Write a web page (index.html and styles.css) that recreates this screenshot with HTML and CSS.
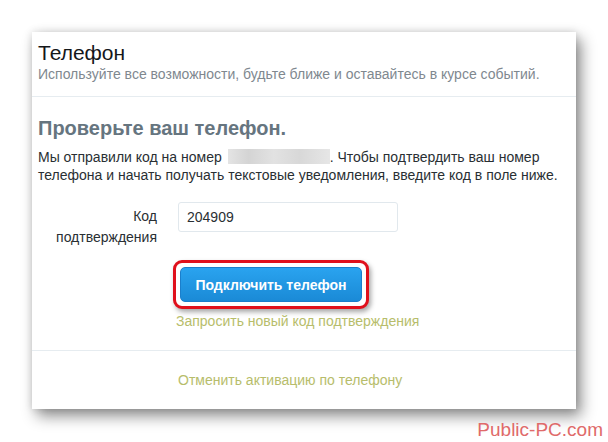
FILE: index.html
```html
<!DOCTYPE html>
<html lang="ru">
<head>
    <meta charset="UTF-8">
    <title>Телефон</title>
    <link rel="stylesheet" href="styles.css">
</head>
<body>
    <div class="card">
        <!-- Header -->
        <div class="card-head">
            <h1>Телефон</h1>
            <p class="subtitle">Используйте все возможности, будьте ближе и оставайтесь в курсе событий.</p>
        </div>
        <div class="card-body">
            <h2>Проверьте ваш телефон.</h2>
            <p class="info">
                Мы отправили код на номер <span class="blur"></span>. Чтобы подтвердить ваш номер
                телефона и начать получать текстовые уведомления, введите код в поле ниже.
            </p>
            <div class="form-row">
                <label class="code-label" for="code">Код подтверждения</label>
                <input class="code-input" id="code" type="text" value="204909">
            </div>
            <div class="actions">
                <div class="highlight">
                    <button class="btn">Подключить телефон</button>
                </div>
                <a class="link" href="#">Запросить новый код подтверждения</a>
            </div>
        </div>
        <div class="card-foot">
            <a class="link" href="#">Отменить активацию по телефону</a>
        </div>
    </div>
    <div class="watermark">Public-PC.com</div>
</body>
</html>
```

FILE: styles.css
```css
body {
    margin: 0;
    padding: 32px 0 0 32px;
    font-family: "Liberation Sans", Arial, sans-serif;
    background-color: #fff;
    width: 608px;
    height: 442px;
    box-sizing: border-box;
    position: relative;
    overflow: hidden;
}
.card {
    width: 544px;
    height: 377px;
    background-color: #fff;
    box-shadow: 5px 7px 14px rgba(0, 0, 0, 0.45), 0 0 8px rgba(0, 0, 0, 0.12);
    display: flex;
    flex-direction: column;
}
.card-head {
    padding: 9px 6px 0 6px;
    height: 55px;
    border-bottom: 1px solid #e6ecf0;
}
h1 {
    margin: 0;
    font-size: 21px;
    font-weight: normal;
    color: #14171a;
    line-height: 24px;
}
.subtitle {
    margin: 0;
    font-size: 14px;
    line-height: 18px;
    color: #80888f;
}
.card-body {
    padding: 19px 6px 0 6px;
    height: 234px;
    border-bottom: 1px solid #e6ecf0;
}
h2 {
    margin: 0;
    font-size: 20px;
    line-height: 24px;
    color: #66757f;
}
.info {
    margin: 8px 0 0 0;
    font-size: 14px;
    line-height: 18px;
    color: #292f33;
}
.blur {
    display: inline-block;
    width: 102px;
    height: 15px;
    margin-left: 2px;
    vertical-align: -2px;
    background: linear-gradient(90deg, #e4e4e4 0%, #d4d4d4 20%, #e2e2e2 45%, #d8d8d8 70%, #e6e6e6 100%);
}
.form-row {
    display: flex;
    margin-top: 18px;
}
.code-label {
    width: 119px;
    text-align: right;
    font-size: 14px;
    line-height: 21px;
    color: #292f33;
    padding-top: 4px;
}
.code-input {
    margin-left: 21px;
    width: 220px;
    height: 30px;
    box-sizing: border-box;
    border: 1px solid #e1e8ed;
    border-radius: 3px;
    padding: 0 8px;
    font-family: "Liberation Sans", Arial, sans-serif;
    font-size: 14px;
    color: #292f33;
}
.actions {
    margin-left: 135px;
    margin-top: 12px;
    display: flex;
    flex-direction: column;
    align-items: flex-start;
}
.highlight {
    padding: 4px 4px;
    border: 3px solid #e0101c;
    border-radius: 9px;
    box-shadow: 2px 3px 5px rgba(0, 0, 0, 0.35);
    background-color: #fff;
}
.btn {
    display: block;
    background: linear-gradient(#2aa3ef, #1a8ad6);
    border: 1px solid #1b7fcc;
    border-radius: 5px;
    color: #fff;
    font-family: "Liberation Sans", Arial, sans-serif;
    font-weight: bold;
    font-size: 14px;
    height: 35px;
    width: 182px;
    padding: 0;
}
.link {
    color: #b7bd6b;
    font-size: 14px;
    text-decoration: none;
    line-height: 18px;
    margin-top: 3px;
    margin-left: 3px;
}
.card-foot {
    flex: 1;
    display: flex;
    align-items: center;
    padding-left: 146px;
}
.card-foot .link {
    margin: 0;
}
.watermark {
    position: absolute;
    right: 5px;
    bottom: 1px;
    font-family: "Liberation Sans", Arial, sans-serif;
    font-size: 19px;
    color: #e06a6a;
}
```
